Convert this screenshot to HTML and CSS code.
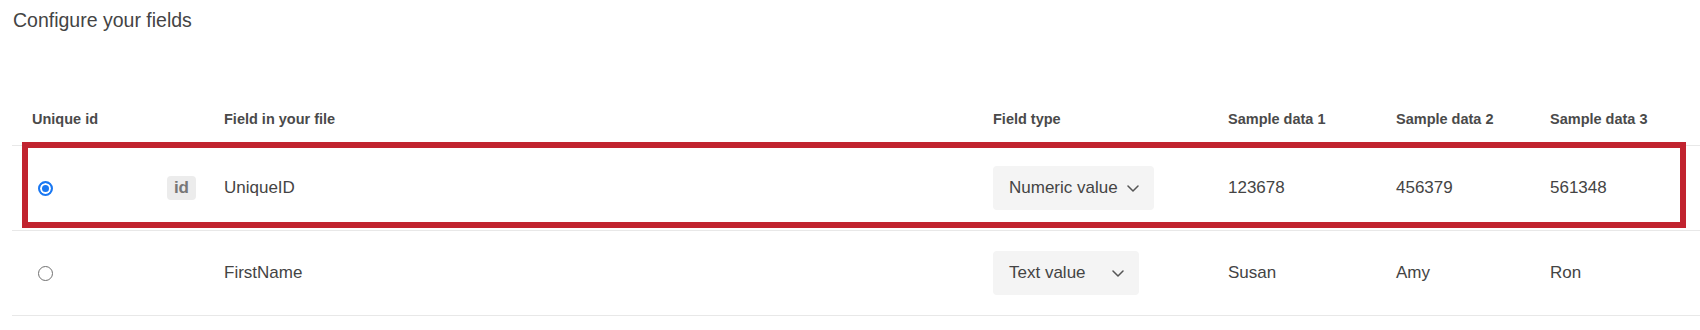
FILE: index.html
```html
<!DOCTYPE html>
<html lang="en">
  <head>
    <meta charset="UTF-8" />
    <meta name="viewport" content="width=device-width, initial-scale=1.0" />
    <title>Configure your fields</title>

    <link rel="stylesheet" href="styles.css">
  </head>
  <body>
    <h1 class="title">Configure your fields</h1>

    <div class="fields">
      <!-- Header -->
      <div class="row row-head">
        <span>Unique id</span>
        <span>Field in your file</span>
        <span>Field type</span>
        <span>Sample data 1</span>
        <span>Sample data 2</span>
        <span>Sample data 3</span>
      </div>

      <!-- UniqueID -->
      <div class="row row-body">
        <div class="highlight"></div>
        <div class="cell-id">
          <input type="radio" name="unique" class="radio" checked aria-label="UniqueID is unique id" />
          <span class="badge">id</span>
        </div>
        <span>UniqueID</span>
        <div>
          <button class="select">
            <span>Numeric value</span>
            <svg class="chevron" width="12" height="7" viewBox="0 0 12 7"><path d="M1 1 L6 6 L11 1" /></svg>
          </button>
        </div>
        <span>123678</span>
        <span>456379</span>
        <span>561348</span>
      </div>

      <!-- FirstName -->
      <div class="row row-body">
        <div class="cell-id">
          <input type="radio" name="unique" class="radio" aria-label="FirstName is unique id" />
        </div>
        <span>FirstName</span>
        <div>
          <button class="select">
            <span>Text value</span>
            <svg class="chevron" width="12" height="7" viewBox="0 0 12 7"><path d="M1 1 L6 6 L11 1" /></svg>
          </button>
        </div>
        <span>Susan</span>
        <span>Amy</span>
        <span>Ron</span>
      </div>
    </div>
  </body>
</html>
```

FILE: styles.css
```css
body {
  margin: 0;
  font-family: "Liberation Sans", Arial, Helvetica, sans-serif;
  color: #444;
  background: #fff;
  overflow: hidden;
}

.title {
  margin: 8px 0 0 13px;
  font-size: 19.5px;
  line-height: 24px;
  font-weight: normal;
  color: #444;
}

.fields {
  margin: 60px 0 0 12px;
}
.row {
  display: grid;
  grid-template-columns: 192px 769px 235px 168px 154px 1fr;
  align-items: center;
  padding-left: 20px;
  border-bottom: 1px solid #e8e8e8;
}
.row-head {
  padding-top: 18px;
  padding-bottom: 17px;
  font-size: 14.5px;
  line-height: 18px;
  font-weight: bold;
  color: #4a4a4a;
}
.row-body {
  position: relative;
  height: 84px;
  font-size: 17px;
  color: #444;
}

.cell-id {
  display: flex;
  align-items: center;
}
.radio {
  appearance: none;
  margin: 0 0 0 6px;
  width: 15px;
  height: 15px;
  border: 1px solid #707070;
  border-radius: 50%;
  background: #fff;
}
.radio:checked {
  border: 2px solid #1a78f2;
  background: #1a78f2;
  box-shadow: inset 0 0 0 2px #fff;
}
.badge {
  margin: 0 28px 0 auto;
  padding: 0 7px;
  height: 24px;
  line-height: 24px;
  border-radius: 4px;
  background: #ececec;
  color: #777;
  font-weight: bold;
  font-size: 17px;
}

.select {
  display: flex;
  align-items: center;
  justify-content: space-between;
  gap: 9px;
  min-width: 146px;
  height: 44px;
  padding: 0 15px 0 16px;
  border: none;
  border-radius: 4px;
  background: #f4f4f4;
  font-family: inherit;
  font-size: 17px;
  color: #444;
  cursor: pointer;
}
.chevron path {
  fill: none;
  stroke: #555;
  stroke-width: 1.5;
  stroke-linecap: round;
  stroke-linejoin: round;
}

/* red annotation box around the first row */
.highlight {
  position: absolute;
  left: 10px;
  right: 14px;
  top: -4px;
  bottom: 2px;
  border: 6px solid #c1232f;
  pointer-events: none;
}
```
